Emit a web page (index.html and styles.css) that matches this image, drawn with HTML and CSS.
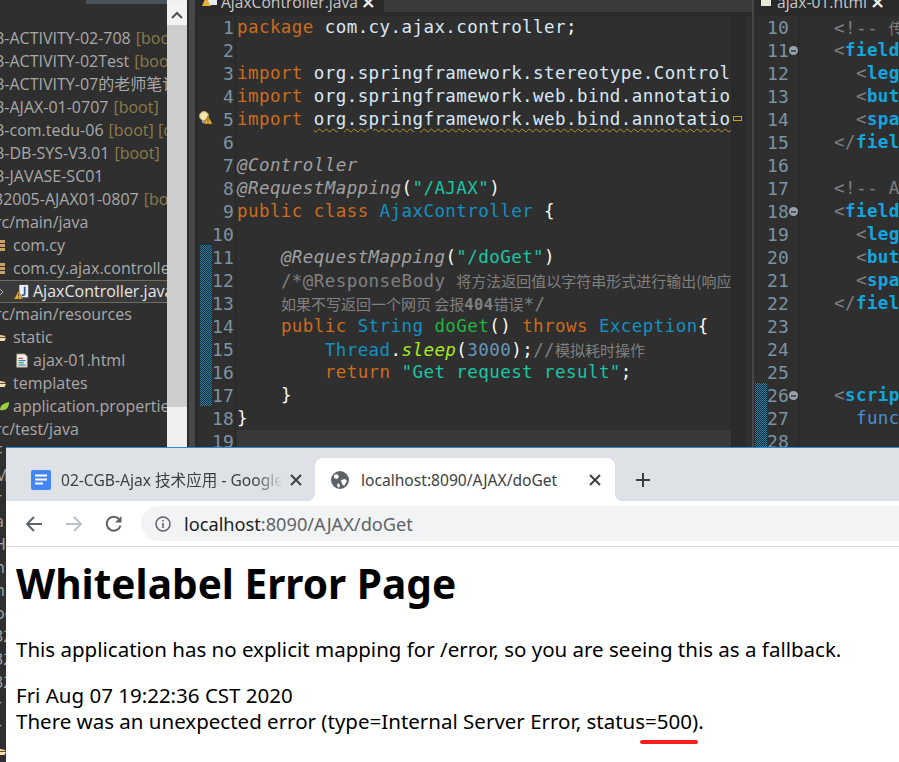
FILE: index.html
```html
<!DOCTYPE html>
<html lang="en">
<head>
<meta charset="utf-8">
<title>Whitelabel Error Page</title>
<link rel="stylesheet" href="styles.css">
</head>
<body>
<svg class="defs" width="0" height="0"><defs><pattern id="hatch" width="2" height="2" patternUnits="userSpaceOnUse"><rect width="2" height="2" fill="#16282f"/><rect width="1" height="1" fill="#1d82a8"/><rect x="1" y="1" width="1" height="1" fill="#1d82a8"/></pattern></defs></svg>
<div class="desktop">
  <div class="ide">
    <aside class="tree">
      <div class="tree-top"><span class="tree-top-block"></span></div>
      <div class="row clip">B-ACTIVITY-02-708 <em>[boot]</em></div>
      <div class="row clip">B-ACTIVITY-02Test <em>[boot]</em></div>
      <div class="row clip">B-ACTIVITY-07的老师笔记 <em>[boot]</em></div>
      <div class="row clip">B-AJAX-01-0707 <em>[boot]</em></div>
      <div class="row clip">B-com.tedu-06 <em>[boot] [devtools]</em></div>
      <div class="row clip">B-DB-SYS-V3.01 <em>[boot]</em></div>
      <div class="row clip">B-JAVASE-SC01</div>
      <div class="row clip">32005-AJAX01-0807 <em>[boot]</em></div>
      <div class="row src">rc/main/java</div>
      <div class="row lvl1"><svg class="ic-left" viewBox="0 0 6 14"><path fill="#c9a26a" d="M0 1h5v3H0zM0 5h5v3H0zM0 9h5v3H0z"/></svg>com.cy</div>
      <div class="row lvl1"><svg class="ic-left" viewBox="0 0 6 14"><path fill="#c9a26a" d="M0 1h5v3H0zM0 5h5v3H0zM0 9h5v3H0z"/></svg>com.cy.ajax.controller</div>
      <div class="row lvl2 selected">
        <svg class="twist" viewBox="0 0 4 8" width="4" height="8"><path fill="none" stroke="#b0b0b0" d="M0 1l3 3-3 3"/></svg>
        <svg class="file-ic" viewBox="0 0 18 18"><path fill="#eef2f7" d="M6 1h10v14H6z"/><path fill="none" stroke="#2a5aa8" stroke-width="2" d="M12 3v8c0 2-2 2-3 1"/><path fill="#e8b33c" stroke="#5a4410" stroke-width=".6" d="M5 8l5 9H0z"/><path fill="#4a3608" d="M4.600 11h.9v3h-.9zM4.600 15h.9v1h-.9z"/></svg>AjaxController.java</div>
      <div class="row src">rc/main/resources</div>
      <div class="row lvl1"><svg class="ic-left" viewBox="0 0 8 10"><path fill="#e8c98a" d="M0 1h3l1 1h3v2H0z"/><path fill="#f5e2b4" d="M0 5h8l-2 4H0z"/></svg>static</div>
      <div class="row lvl2"><svg class="file-ic" viewBox="0 0 18 18"><path fill="#f2f2ea" stroke="#8a8a70" d="M3 1h9l3 3v12H3z"/><path stroke="#d24b3e" stroke-width="1.400" d="M5 6h5"/><path stroke="#3f7fc4" stroke-width="1.400" d="M5 8.500h8"/><path stroke="#3a9c5a" stroke-width="1.400" d="M5 11h6"/><path stroke="#3f7fc4" stroke-width="1.400" d="M5 13.500h8"/></svg>ajax-01.html</div>
      <div class="row lvl1"><svg class="ic-left" viewBox="0 0 8 10"><path fill="#e8c98a" d="M0 1h3l1 1h3v2H0z"/><path fill="#f5e2b4" d="M0 5h8l-2 4H0z"/></svg>templates</div>
      <div class="row lvl1"><svg class="ic-leaf" viewBox="0 0 9 10"><path fill="#9ccf3c" d="M0 8C0 3 4 1 9 0 9 6 6 9 0 8z"/></svg>application.properties</div>
      <div class="row src">rc/test/java</div>
      <div class="row clip">F</div>
      <div class="row clip">M</div>
      <div class="row src">r</div>
      <div class="row src">a</div>
      <div class="row clip">H</div>
      <div class="row src">n</div>
      <div class="row src">n</div>
      <div class="row src">oc</div>
      <div class="row clip">32</div>
      <div class="row clip">32</div>
      <div class="row clip">32</div>
      <div class="row src">r</div>
      <div class="row src">r</div>
      <div class="row lvl1"><svg class="ic-left" viewBox="0 0 8 10"><path fill="#e8c98a" d="M0 1h3l1 1h3v2H0z"/><path fill="#f5e2b4" d="M0 5h8l-2 4H0z"/></svg></div>
    </aside>

    <div class="vscroll">
      <div class="vscroll-btn"><svg viewBox="0 0 12 8" width="12" height="8"><path fill="none" stroke="#505050" stroke-width="2" d="M1 7l5-5 5 5"/></svg></div>
      <div class="vscroll-thumb"></div>
    </div>
    <div class="sash"></div>

    <section class="editor main">
      <div class="tabs">
        <div class="ed-tab">
          <svg class="tab-ic" viewBox="0 0 16 14"><path fill="#e8edf4" d="M6 0h9v10H6z"/><path fill="#e8b33c" d="M4 2l5 9H0z"/></svg><span class="tab-name">AjaxController.java</span><span class="tab-x">×</span>
        </div>
        <div class="ed-tab-rest"></div>
      </div>
      <div class="ed-body">
        <div class="ruler">
          <div class="warn"><svg viewBox="0 0 14 14" width="14" height="14"><circle cx="5" cy="5" r="4.500" fill="#f3e6a8" stroke="#b9a45c"/><path fill="#9aa4b0" d="M3 9h4v3H3z"/><path fill="#efb52e" stroke="#5b4510" stroke-width=".6" d="M9 5l4.500 8h-9z"/><path fill="#4a3608" d="M8.600 7.500h.8v3h-.8zM8.600 11h.8v1h-.8z"/></svg></div>
          <svg class="diff" width="12" height="161"><rect width="12" height="161" fill="url(#hatch)"/></svg>
        </div>
        <div class="nums">
          <div>1</div><div>2</div><div>3</div><div>4</div><div>5</div><div>6</div><div>7</div><div>8</div><div>9</div><div>10</div><div>11</div><div>12</div><div>13</div><div>14</div><div>15</div><div>16</div><div>17</div><div>18</div><div>19</div>
        </div>
        <div class="code">
          <div class="ln"><b class="kw">package</b> com.cy.ajax.controller<i class="p">;</i></div>
          <div class="ln"></div>
          <div class="ln"><b class="kw">import</b> org.springframework.stereotype.Controller<i class="p">;</i></div>
          <div class="ln"><b class="kw">import</b> org.springframework.web.bind.annotation.RequestMapping<i class="p">;</i></div>
          <div class="ln"><b class="kw">import</b> <span class="squig">org.springframework.web.bind.annotation.ResponseBody;         </span></div>
          <div class="ln"></div>
          <div class="ln"><span class="an">@Controller</span></div>
          <div class="ln"><span class="an">@RequestMapping</span><i class="p">(</i><span class="str">"/AJAX"</span><i class="p">)</i></div>
          <div class="ln"><b class="kw">public</b> <b class="kw">class</b> <span class="ty">AjaxController</span> <i class="p">{</i></div>
          <div class="ln"></div>
          <div class="ln">    <span class="an">@RequestMapping</span><i class="p">(</i><span class="str">"/doGet"</span><i class="p">)</i></div>
          <div class="ln">    <span class="cm">/*@ResponseBody <span class="cjk">将方法返回值以字符串形式进行输出(响应到客户端)</span></span></div>
          <div class="ln">    <span class="cm"><span class="cjk">如果不写返回一个网页 会报</span><b class="num404">404</b><span class="cjk">错误</span>*/</span></div>
          <div class="ln">    <b class="kw">public</b> <span class="ty">String</span> <span class="me">doGet</span><i class="p">()</i> <b class="kw">throws</b> <span class="ty">Exception</span><i class="p">{</i></div>
          <div class="ln">        <span class="ty">Thread</span><i class="p">.</i><span class="sm">sleep</span><i class="p">(</i><span class="nb">3000</span><i class="p">);</i><span class="cm">//<span class="cjk">模拟耗时操作</span></span></div>
          <div class="ln">        <b class="kw">return</b> <span class="str">"Get request result"</span><i class="p">;</i></div>
          <div class="ln">    <i class="p">}</i></div>
          <div class="ln"><i class="p">}</i></div>
          <div class="ln current"></div>
        </div>
        <div class="overview"><span class="ov-mark"></span></div>
      </div>
    </section>
    <div class="sash narrow"></div>

    <section class="editor side">
      <div class="tabs">
        <div class="ed-tab">
          <svg class="tab-ic" viewBox="0 0 14 14"><path fill="#e8e8dc" d="M2 0h10v11H2z"/></svg><span class="tab-name">ajax-01.html</span><span class="tab-x">×</span>
        </div>
      </div>
      <div class="ed-body">
        <div class="ruler small">
          <svg class="diff" width="12" height="64"><rect width="12" height="64" fill="url(#hatch)"/></svg>
        </div>
        <div class="nums wide">
          <div>10</div><div class="fold">11</div><div>12</div><div>13</div><div>14</div><div>15</div><div>16</div><div>17</div><div class="fold">18</div><div>19</div><div>20</div><div>21</div><div>22</div><div>23</div><div>24</div><div>25</div><div class="fold">26</div><div>27</div><div>28</div>
        </div>
        <div class="code html">
          <div class="ln"><span class="tg">&lt;!-- </span><span class="tg cjk">传</span></div>
          <div class="ln"><span class="tg">&lt;</span><span class="el">fieldset</span></div>
          <div class="ln">  <span class="tg">&lt;</span><span class="el">legend</span></div>
          <div class="ln">  <span class="tg">&lt;</span><span class="el">button</span></div>
          <div class="ln">  <span class="tg">&lt;</span><span class="el">span</span></div>
          <div class="ln"><span class="tg">&lt;/</span><span class="el">fieldset</span></div>
          <div class="ln"></div>
          <div class="ln"><span class="tg">&lt;!-- A</span></div>
          <div class="ln"><span class="tg">&lt;</span><span class="el">fieldset</span></div>
          <div class="ln">  <span class="tg">&lt;</span><span class="el">legend</span></div>
          <div class="ln">  <span class="tg">&lt;</span><span class="el">button</span></div>
          <div class="ln">  <span class="tg">&lt;</span><span class="el">span</span></div>
          <div class="ln"><span class="tg">&lt;/</span><span class="el">fieldset</span></div>
          <div class="ln"></div>
          <div class="ln"></div>
          <div class="ln"></div>
          <div class="ln"><span class="tg">&lt;</span><span class="el">script</span></div>
          <div class="ln">  <span class="fn">function</span></div>
          <div class="ln"></div>
        </div>
      </div>
    </section>
  </div>

  <main class="browser">
    <div class="strip">
      <div class="tab">
        <svg class="docs" viewBox="0 0 20 20" width="20" height="20"><rect width="20" height="20" rx="2" fill="#4285f4"/><path fill="#fff" d="M4 4.500h12v2H4zM4 8.500h12v2H4zM4 12.500h8v2H4z"/></svg>
        <span class="tab-title fade">02-CGB-Ajax 技术应用 - Google Docs</span>
        <svg class="x" viewBox="0 0 12 12" width="12" height="12"><path stroke="#3c4043" stroke-width="2" d="M1 1l10 10M11 1L1 11"/></svg>
      </div>
      <div class="tab active">
        <svg class="globe" viewBox="0 0 18 18" width="18" height="18"><circle cx="9" cy="9" r="9" fill="#5f6368"/><path fill="#fff" d="M3 4c2-1 3-1 4 0l1 2-2 2-3-1zM10 9l4-1 2 2-3 5-2-2zM7 12l2 2-1 3-2-2z"/></svg>
        <span class="tab-title">localhost:8090/AJAX/doGet</span>
        <svg class="x" viewBox="0 0 12 12" width="12" height="12"><path stroke="#3c4043" stroke-width="2" d="M1 1l10 10M11 1L1 11"/></svg>
      </div>
      <svg class="plus" viewBox="0 0 16 16" width="16" height="16"><path stroke="#3c4043" stroke-width="2" d="M8 1v14M1 8h14"/></svg>
    </div>
    <div class="toolbar">
      <svg class="nav" viewBox="0 0 18 18" width="18" height="18"><path fill="none" stroke="#5f6368" stroke-width="2" d="M17 9H2M9 2L2 9l7 7"/></svg>
      <svg class="nav" viewBox="0 0 18 18" width="18" height="18"><path fill="none" stroke="#bdc1c6" stroke-width="2" d="M1 9h15M9 2l7 7-7 7"/></svg>
      <svg class="nav" viewBox="0 0 18 18" width="18" height="18"><path fill="none" stroke="#5f6368" stroke-width="2" d="M15.500 10.500A7 7 0 1 1 14 4"/><path fill="#5f6368" d="M16.500 1v6.500H10z"/></svg>
      <div class="omni">
        <svg class="info" viewBox="0 0 16 16" width="16" height="16"><circle cx="8" cy="8" r="7" fill="none" stroke="#5f6368" stroke-width="1.500"/><path fill="#5f6368" d="M7.200 7h1.600v5H7.200zM7.200 4h1.600v1.600H7.200z"/></svg>
        <span class="url">localhost<span class="url-rest">:8090/AJAX/doGet</span></span>
      </div>
    </div>
    <article class="page">
      <h1>Whitelabel Error Page</h1>
      <p class="fallback">This application has no explicit mapping for /error, so you are seeing this as a fallback.</p>
      <div class="when">Fri Aug 07 19:22:36 CST 2020</div>
      <div class="what">There was an unexpected error (type=Internal Server Error, status<span class="mark">=500)</span>.</div>
    </article>
  </main>
</div>
</body>
</html>
```

FILE: styles.css
```css
* { box-sizing: border-box; }
html, body { margin: 0; padding: 0; }
body { width: 899px; height: 762px; overflow: hidden; background: #2f2f2f; }
.defs { position: absolute; }
.desktop { position: relative; width: 899px; height: 762px; overflow: hidden; }

/* IDE */
.ide { display: flex; height: 762px; background: #2f2f2f; }
.tree { width: 167px; flex: none; overflow: hidden; font: 16px/23px "Open Sans", "Noto Sans CJK SC", sans-serif; color: #a9a9a9; }
.tree-top { height: 27px; overflow: hidden; }
.tree-top-block { display: block; margin-left: 86px; width: 81px; height: 4px; background: #4c5356; }
.row { height: 23px; white-space: nowrap; display: flex; align-items: center; }
.row em { font-style: normal; color: #8c7b4a; margin-left: 5px; }
.row.clip { margin-left: -6px; }
.row.src { margin-left: -5px; }
.row.lvl1 { padding-left: 0; }
.row.lvl2 { padding-left: 14px; }
.ic-left { width: 6px; height: 14px; flex: none; margin-right: 7px; }
.ic-leaf { width: 9px; height: 10px; flex: none; margin-right: 4px; }
.file-ic { width: 16px; height: 16px; flex: none; margin-right: 3px; }
.row.selected { color: #e6e6e6; background: #3a3a3a; border: 1px solid #6b6b5e; border-width: 1px 0; padding-left: 0; }
.twist { flex: none; margin-right: 10px; }

.vscroll { width: 20px; flex: none; height: 447px; background: #f0f0f0; padding-top: 4px; }
.vscroll-btn { height: 21px; background: #f3f3f3; display: flex; align-items: center; justify-content: center; }
.vscroll-thumb { height: 382px; background: #cdcdcd; }
.sash { width: 11px; flex: none; background: #2b2b2b; border-left: 2px solid #2b2b2b; border-right: 3px solid #2b2b2b; background-clip: padding-box; background-color: #474747; }
.sash.narrow { width: 2px; background: #474747; border: 0; }

.editor { flex: none; display: flex; flex-direction: column; height: 447px; overflow: hidden; }
.editor.main { width: 554px; }
.editor.side { flex: 1; min-width: 0; margin-left: 0; }
.tabs { height: 16px; flex: none; display: flex; background: #2a2a2a; overflow: hidden; font: 15.600px/16px "Open Sans", sans-serif; color: #c8c8c8; }
.ed-tab { display: flex; align-items: flex-start; width: 186px; margin-top: -10px; padding-left: 4px; height: 30px; }
.tab-ic { width: 16px; height: 14px; margin: 5px 3px 0 0; flex: none; }
.tab-name { line-height: 24px; }
.tab-x { font: bold 18px/24px "DejaVu Sans", sans-serif; color: #f0f0f0; margin-left: 3px; }
.ed-tab-rest { flex: 1; height: 12px; background: #3a3a3a; }
.side .ed-tab { padding-left: 4px; width: auto; }

.ed-body { flex: 1; display: flex; min-height: 0; }
.ruler { width: 14px; flex: none; position: relative; background: #2f2f2f; padding-top: 229px; padding-left: 2px; }
.ruler.small { width: 13px; padding-top: 367px; padding-left: 1px; }
.warn { position: absolute; left: 1px; top: 95px; }
.diff { display: block; }

.nums { width: 22px; flex: none; font: 18px/23px "DejaVu Sans Mono", monospace; color: #7d93a3; text-align: right; border-right: 1px solid #262626; padding-right: 1px; letter-spacing: .2px; box-sizing: content-box; }
.nums.wide { width: 22px; padding-right: 9px; }
.nums .fold { position: relative; }
.nums .fold::after { content: ""; position: absolute; right: -9px; top: 7px; width: 9px; height: 9px; border-radius: 50%; background: linear-gradient(#48505a, #48505a) center / 5px 2px no-repeat #98a2ae; }

.code { width: 495px; flex: none; padding-left: 1px; font: 17.500px/23px "DejaVu Sans Mono", "Noto Sans CJK SC", monospace; letter-spacing: .43px; color: #d9e8f7; overflow: hidden; }
.code.html { flex: 1; width: auto; padding-left: 35px; }
.ln { height: 23px; white-space: pre; }
.ln b, .ln i { font-weight: normal; font-style: normal; }
.ln .kw { color: #cc6c1d; }
.ln .p { color: #f9faf4; }
.an { color: #a0a0a0; font-style: italic; }
.str { color: #17c6a3; }
.ty { color: #1290c3; }
.cm { color: #808080; }
.cjk { font: 15px/23px "Noto Sans CJK SC", sans-serif; letter-spacing: 0; }
.ln .num404 { font-weight: bold; font-size: 15.500px; }
.me { color: #1eb540; }
.sm { color: #a7ec21; font-style: italic; }
.nb { color: #6897bb; }
.squig { text-decoration: underline wavy #b59a20 1px; text-underline-offset: 3px; }
.current { background: #383838; }
.tg { color: #808080; }
.el { color: #12a5de; font-weight: bold; }
.fn { color: #4a90d0; }
.overview { width: 14px; flex: none; background: #2a2a2a; padding-top: 100px; padding-left: 2px; }
.ov-mark { display: block; width: 9px; height: 5px; border: 1px solid #c9a21c; }

/* Browser */
.browser { position: absolute; left: 6px; top: 447px; right: 0; bottom: 0; background: #fff; border-top: 1px solid #2a8ad4; display: flex; flex-direction: column; font-family: "Noto Sans", "Noto Sans CJK SC", sans-serif; }
.strip { height: 53px; flex: none; background: #dee1e6; display: flex; align-items: flex-end; }
.tab { width: 309px; height: 43px; display: flex; align-items: center; position: relative; padding-left: 25px; padding-right: 13px; }
.tab.active { width: 300px; background: #fff; border-radius: 8px 8px 0 0; padding-left: 16px; padding-right: 14px; }
.tab.active::before, .tab.active::after { content: ""; position: absolute; bottom: 0; width: 8px; height: 8px; }
.tab.active::before { left: -8px; background: radial-gradient(circle at 0 0, transparent 8px, #fff 8px); }
.tab.active::after { right: -8px; background: radial-gradient(circle at 100% 0, transparent 8px, #fff 8px); }
.docs { flex: none; margin-right: 10px; }
.globe { flex: none; margin-right: 12px; }
.tab-title { flex: 1; min-width: 0; white-space: nowrap; overflow: hidden; font-size: 15.600px; color: #3c4043; }
.tab-title.fade { -webkit-mask-image: linear-gradient(90deg, #000 88%, transparent); mask-image: linear-gradient(90deg, #000 88%, transparent); }
.x { flex: none; margin-left: 8px; }
.plus { flex: none; margin: 0 0 13px 20px; }
.toolbar { height: 45px; flex: none; display: flex; align-items: center; padding-left: 19px; border-bottom: 0; }
.nav { flex: none; margin-right: 22px; }
.nav:nth-child(3) { margin-right: 18px; }
.omni { flex: 1; height: 35px; background: #f1f3f4; border-radius: 18px 0 0 18px; display: flex; align-items: center; padding-left: 14px; font-size: 18.200px; }
.info { flex: none; margin-right: 13px; }
.url { color: #202124; white-space: nowrap; }
.url-rest { color: #5f6368; }
.page { flex: 1; border-top: 1px solid #dadce0; padding: 0 0 0 10px; color: #000; font-size: 20.500px; line-height: 26px; }
h1 { margin: 13px 0 0; font-size: 40.600px; line-height: 48px; font-weight: bold; }
.fallback { margin: 28px 0 20px; }
.mark { position: relative; }
.mark::after { content: ""; position: absolute; left: -5px; right: 0; bottom: -9px; height: 4px; border-radius: 2px; background: #f5211a; }
```
